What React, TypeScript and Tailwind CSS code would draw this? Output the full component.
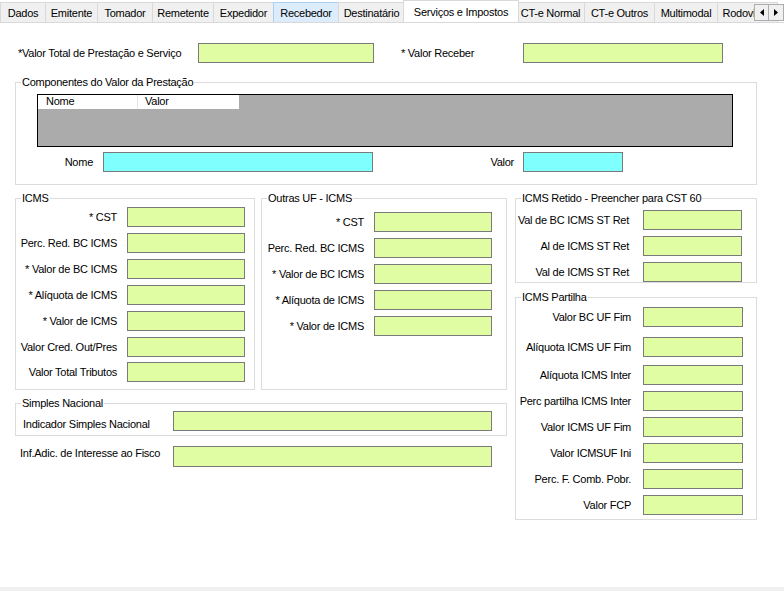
import React from 'react'

const TABS: [string, number][] = [
  ['Dados', 45],
  ['Emitente', 52],
  ['Tomador', 55],
  ['Remetente', 61],
  ['Expedidor', 60],
  ['Recebedor', 65],
  ['Destinatário', 66],
  ['Serviços e Impostos', 112],
  ['CT-e Normal', 68],
  ['CT-e Outros', 70],
  ['Multimodal', 63],
  ['Rodoviário', 60],
]

const green = 'bg-[#e0fda4] border border-[#7a7a7a]'
const cyan = 'bg-[#80ffff] border border-[#7a7a7a]'

function Tab({ label, width }: { label: string; width: number }) {
  if (label === 'Serviços e Impostos') {
    return (
      <div
        className="relative z-10 -mx-[2px] -mb-px flex h-[23px] shrink-0 items-center justify-center border border-b-0 border-[#d9d9d9] bg-white"
        style={{ width: width + 4 }}
      >
        {label}
      </div>
    )
  }
  const hover = label === 'Recebedor'
  return (
    <div
      className={`-ml-px flex h-[20px] shrink-0 items-center justify-center overflow-hidden whitespace-nowrap border border-b-0 pt-[2px] first:ml-0 ${
        hover ? 'border-[#a9cff3] bg-[#dcecfc]' : 'border-[#d9d9d9] bg-[#f0f0f0]'
      }`}
      style={{ width: width + 1 }}
    >
      {label}
    </div>
  )
}

function TabStrip() {
  return (
    <div className="relative flex h-[23px] items-end overflow-hidden border-b border-[#d9d9d9]">
      {TABS.map(([l, w]) => (
        <Tab key={l} label={l} width={w} />
      ))}
      <div className="absolute right-0 top-[4px] z-20 flex">
        <div className="flex h-[17px] w-[15px] items-center justify-center border border-[#adadad] bg-[#f0f0f0]">
          <svg width="4" height="7" viewBox="0 0 4 7">
            <path d="M4 0 L0 3.5 L4 7 Z" fill="#000" />
          </svg>
        </div>
        <div className="-ml-px flex h-[17px] w-[16px] items-center justify-center border border-[#adadad] bg-[#f0f0f0]">
          <svg width="4" height="7" viewBox="0 0 4 7">
            <path d="M0 0 L4 3.5 L0 7 Z" fill="#000" />
          </svg>
        </div>
      </div>
    </div>
  )
}

function Group({
  title,
  className = '',
  children,
}: {
  title: string
  className?: string
  children: React.ReactNode
}) {
  return (
    <fieldset className={`m-0 min-w-0 border border-[#dcdcdc] p-0 ${className}`}>
      <legend className="ml-[5px] px-[1px] text-[11px] leading-[12px]">{title}</legend>
      {children}
    </fieldset>
  )
}

type Field = { label: string; mt: number }

function FieldRows({
  rows,
  labelW,
  gap,
  inputW,
}: {
  rows: Field[]
  labelW: number
  gap: number
  inputW: number
}) {
  return (
    <div className="flex flex-col">
      {rows.map((r) => (
        <div key={r.label} className="flex items-center" style={{ marginTop: r.mt }}>
          <div className="whitespace-nowrap text-right" style={{ width: labelW }}>
            {r.label}
          </div>
          <div className={`h-[20px] ${green}`} style={{ marginLeft: gap, width: inputW }} />
        </div>
      ))}
    </div>
  )
}

export default function App() {
  return (
    <div
      className="flex h-[591px] w-[784px] flex-col overflow-hidden bg-white text-[11px] leading-[13px] tracking-[-0.25px] text-black"
      style={{ fontFamily: '"Liberation Sans", Arial, sans-serif' }}
    >
      <TabStrip />

      <div className="flex-1 pl-[15px]">
        {/* top values */}
        <div className="mt-[20px] flex items-center">
          <div className="ml-[3px] w-[180px] whitespace-nowrap">*Valor Total de Prestação e Serviço</div>
          <div className={`h-[20px] w-[176px] ${green}`} />
          <div className="ml-[27px] w-[122px] whitespace-nowrap">* Valor Receber</div>
          <div className={`h-[20px] w-[200px] ${green}`} />
        </div>

        <Group title="Componentes do Valor da Prestação" className="mt-[13px] w-[742px]">
          <div className="pb-[12px]">
            <div className="ml-[21px] mt-[6px] h-[53px] w-[696px] border border-black bg-[#ababab]">
              <div className="flex h-[14px] w-[201px] bg-white">
                <div className="w-[100px] border-r border-[#e5e5e5] pl-[8px]">Nome</div>
                <div className="pl-[7px]">Valor</div>
              </div>
            </div>
            <div className="mt-[5px] flex items-center">
              <div className="w-[77px] text-right">Nome</div>
              <div className={`ml-[10px] h-[20px] w-[270px] ${cyan}`} />
              <div className="w-[141px] text-right">Valor</div>
              <div className={`ml-[9px] h-[20px] w-[100px] ${cyan}`} />
            </div>
          </div>
        </Group>

        <div className="mt-[7px] flex items-start gap-[8px]">
          {/* left column */}
          <div className="flex w-[492px] flex-col">
            <div className="flex gap-[6px]">
              <Group title="ICMS" className="w-[240px]">
                <div className="pb-[7px]">
                  <FieldRows
                    labelW={101}
                    gap={10}
                    inputW={118}
                    rows={[
                      { label: '* CST', mt: 3 },
                      { label: 'Perc. Red. BC ICMS', mt: 6 },
                      { label: '* Valor de BC ICMS', mt: 6 },
                      { label: '* Alíquota de ICMS', mt: 6 },
                      { label: '* Valor de ICMS', mt: 6 },
                      { label: 'Valor Cred. Out/Pres', mt: 6 },
                      { label: 'Valor Total Tributos', mt: 5 },
                    ]}
                  />
                </div>
              </Group>
              <Group title="Outras UF - ICMS" className="w-[246px]">
                <FieldRows
                  labelW={102}
                  gap={10}
                  inputW={118}
                  rows={[
                    { label: '* CST', mt: 8 },
                    { label: 'Perc. Red. BC ICMS', mt: 6 },
                    { label: '* Valor de BC ICMS', mt: 6 },
                    { label: '* Alíquota de ICMS', mt: 6 },
                    { label: '* Valor de ICMS', mt: 6 },
                  ]}
                />
              </Group>
            </div>

            <Group title="Simples Nacional" className="mt-[7px] w-[492px]">
              <div className="mt-[2px] flex items-end pb-[4px]">
                <div className="w-[157px] whitespace-nowrap pl-[7px]">Indicador Simples Nacional</div>
                <div className={`h-[20px] w-[319px] ${green}`} />
              </div>
            </Group>

            <div className="mt-[10px] flex items-start">
              <div className="mt-[1px] w-[158px] whitespace-nowrap pl-[5px]">Inf.Adic. de Interesse ao Fisco</div>
              <div className={`h-[21px] w-[319px] ${green}`} />
            </div>
          </div>

          {/* right column */}
          <div className="flex w-[242px] flex-col">
            <Group title="ICMS Retido - Preencher para CST 60" className="w-[242px]">
              <FieldRows
                labelW={113}
                gap={14}
                inputW={99}
                rows={[
                  { label: 'Val de BC ICMS ST Ret', mt: 6 },
                  { label: 'Al de ICMS ST Ret', mt: 6 },
                  { label: 'Val de ICMS ST Ret', mt: 6 },
                ]}
              />
            </Group>
            <Group title="ICMS Partilha" className="mt-[8px] w-[242px]">
              <div className="pb-[4px]">
                <FieldRows
                  labelW={115}
                  gap={12}
                  inputW={100}
                  rows={[
                    { label: 'Valor BC UF Fim', mt: 4 },
                    { label: 'Alíquota ICMS UF Fim', mt: 10 },
                    { label: 'Alíquota ICMS Inter', mt: 8 },
                    { label: 'Perc partilha ICMS Inter', mt: 6 },
                    { label: 'Valor ICMS UF Fim', mt: 6 },
                    { label: 'Valor ICMSUF Ini', mt: 6 },
                    { label: 'Perc. F. Comb. Pobr.', mt: 6 },
                    { label: 'Valor FCP', mt: 6 },
                  ]}
                />
              </div>
            </Group>
          </div>
        </div>
      </div>

      <div className="h-[4px] bg-[#f0f0f0]" />
    </div>
  )
}
